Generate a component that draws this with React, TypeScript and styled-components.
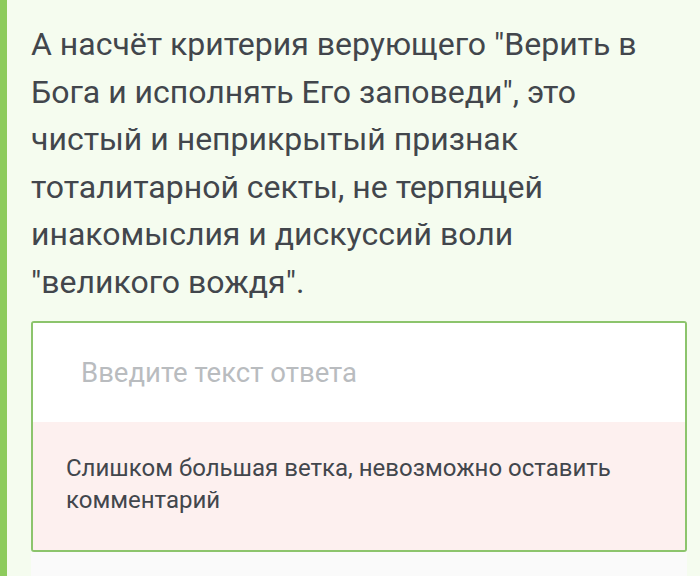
import styled, { createGlobalStyle } from 'styled-components';

const GlobalStyle = createGlobalStyle`
  html, body {
    margin: 0;
    padding: 0;
    background: #f5fcef;
    font-family: Roboto, "Noto Sans", sans-serif;
  }
`;

const Page = styled.div`
  display: flex;
  min-height: 576px;
  overflow: hidden;
`;

const Branch = styled.div`
  width: 7px;
  flex-shrink: 0;
  background: #8dcb5c;
`;

const Content = styled.div`
  flex: 1;
  padding: 21px 13px 0 24px;
`;

const Comment = styled.p`
  margin: 0 32px 15px 0;
  font-size: 32px;
  line-height: 47.5px;
  color: #42464c;
`;

const ReplyBox = styled.div`
  border: 2px solid #8cc46c;
  border-radius: 3px;
  overflow: hidden;
`;

const Input = styled.div`
  height: 99px;
  display: flex;
  align-items: center;
  padding-left: 48px;
  background: #ffffff;
  font-size: 27.5px;
  color: #b9bcbf;
`;

const Notice = styled.div`
  background: #fdf0ef;
  padding: 30px 34px 34px 33px;
  font-size: 24px;
  line-height: 32px;
  color: #42464c;
`;

const Footer = styled.div`
  height: 30px;
  background: #fafafa;
`;

export default function App() {
  return (
    <>
      <GlobalStyle />
      <Page>
        <Branch />
        <Content>
          <Comment>
            А насчёт критерия верующего "Верить в Бога и исполнять Его заповеди", это
            чистый и неприкрытый признак тоталитарной секты, не терпящей инакомыслия и
            дискуссий воли "великого вождя".
          </Comment>
          <ReplyBox>
            <Input>Введите текст ответа</Input>
            <Notice>Слишком большая ветка, невозможно оставить комментарий</Notice>
          </ReplyBox>
          <Footer />
        </Content>
      </Page>
    </>
  );
}
